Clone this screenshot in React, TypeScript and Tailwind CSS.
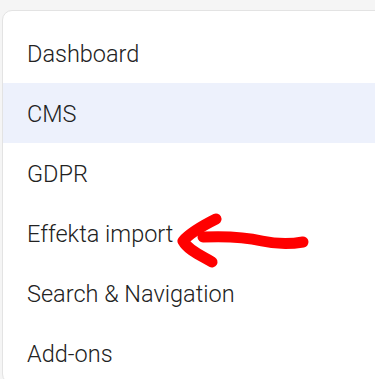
const items = ["Dashboard", "CMS", "GDPR", "Effekta import", "Search & Navigation", "Add-ons"];

export default function App() {
  return (
    <div className="relative h-[379px] w-[375px] overflow-hidden bg-[#f5f5f5] pt-[10px] pl-[2px]">
      <div className="w-[400px] rounded-[10px] border border-[#e3e3e3] bg-white pt-[12px] font-['Roboto',sans-serif] text-[23.5px] font-light text-[#222222]">
        {items.map((label) => (
          <div
            key={label}
            className={`flex h-[60px] items-center pt-[4px] pl-[24px] ${label === "CMS" ? "bg-[#edf1fc]" : ""}`}
          >
            {label}
          </div>
        ))}
      </div>
      <svg className="absolute left-0 top-0" width="375" height="379" viewBox="0 0 375 379" fill="none">
        <path
          d="M216 219 C204 225 190 233 183 241 C188 250 200 255 212 262"
          stroke="#ff0000"
          strokeWidth="11"
          strokeLinecap="round"
          strokeLinejoin="round"
        />
        <path
          d="M203 237 C225 236 245 237 262 241 C280 245 292 244 303 242"
          stroke="#ff0000"
          strokeWidth="11"
          strokeLinecap="round"
        />
      </svg>
    </div>
  );
}
